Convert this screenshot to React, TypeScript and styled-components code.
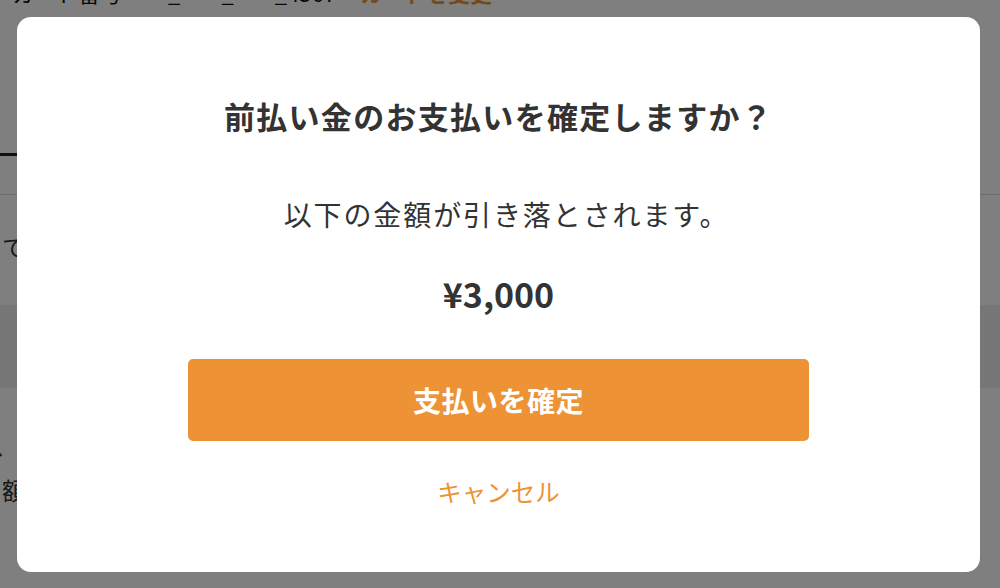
import React from "react";
import styled, { createGlobalStyle } from "styled-components";

const GlobalStyle = createGlobalStyle`
  html, body {
    margin: 0;
    padding: 0;
    width: 1000px;
    height: 588px;
    overflow: hidden;
    background: #ffffff;
    font-family: "Noto Sans CJK JP", "Noto Sans", sans-serif;
  }
  * { box-sizing: border-box; }
`;

const Page = styled.div`
  width: 1000px;
  height: 588px;
  overflow: hidden;
  background: #ffffff;
  color: #222;
`;

const TopLine = styled.div`
  display: flex;
  align-items: baseline;
  gap: 24px;
  margin-top: -20px;
  padding-left: 12px;
  height: 26px;
  font-size: 22px;
  line-height: 24px;
  color: #111;
`;

const OrangeLink = styled.span`
  color: #ed9335;
  font-weight: 700;
`;

const TabBar = styled.div`
  display: flex;
  height: 189px;
  align-items: flex-end;
  border-bottom: 1px solid #d8d8d8;
`;

const Tab = styled.div<{ $active?: boolean }>`
  width: 220px;
  height: 40px;
  margin-bottom: 38px;
  border-bottom: 3px solid ${(p) => (p.$active ? "#222" : "transparent")};
`;

const BodyText = styled.p<{ $indent?: number }>`
  margin: 0;
  padding-left: 2px;
  font-size: 24px;
  line-height: 32px;
  color: #333;
  text-indent: ${(p) => p.$indent ?? 0}px;
  white-space: nowrap;
`;

const Section = styled.div`
  padding-top: 36px;
  height: 110px;
`;

const GreyBand = styled.div`
  height: 83px;
  background: #eeeeee;
`;

const Lower = styled.div`
  padding-top: 41px;
  display: flex;
  flex-direction: column;
  gap: 13px;
`;

const Overlay = styled.div`
  position: fixed;
  inset: 0;
  background: rgba(0, 0, 0, 0.5);
  display: flex;
  padding: 17px 20px 16px 17px;
`;

const Modal = styled.div`
  flex: 1;
  background: #ffffff;
  border-radius: 14px;
  display: flex;
  flex-direction: column;
  align-items: center;
  padding-top: 83px;
`;

const Title = styled.h2`
  margin: 0;
  font-size: 31px;
  line-height: 32px;
  font-weight: 700;
  color: #333333;
  letter-spacing: 1.3px;
`;

const Message = styled.p`
  margin: 67px 0 0;
  padding-left: 16px;
  font-size: 28px;
  line-height: 30px;
  font-weight: 400;
  color: #333333;
  letter-spacing: 1.9px;
`;

const Amount = styled.div`
  margin-top: 48px;
  font-size: 34px;
  line-height: 34px;
  font-weight: 700;
  color: #333333;
`;

const ConfirmButton = styled.button`
  margin-top: 48px;
  width: 621px;
  height: 82px;
  border: none;
  border-radius: 5px;
  background: #ed9335;
  color: #ffffff;
  font-family: inherit;
  font-size: 28px;
  font-weight: 700;
  letter-spacing: 0.5px;
  cursor: pointer;
`;

const CancelButton = styled.button`
  margin-top: 36px;
  border: none;
  background: transparent;
  color: #ed9335;
  font-family: inherit;
  font-size: 24.5px;
  line-height: 30px;
  font-weight: 400;
  padding: 0;
  cursor: pointer;
`;

export default function App() {
  return (
    <>
      <GlobalStyle />
      <Page>
        <TopLine>
          <span>カード番号 ****_****_****_4567</span>
          <OrangeLink>カードを変更</OrangeLink>
        </TopLine>
        <TabBar>
          <Tab $active />
          <Tab />
        </TabBar>
        <Section>
          <BodyText>てください。</BodyText>
        </Section>
        <GreyBand />
        <Lower>
          <BodyText $indent={-8}>、お支払いください。</BodyText>
          <BodyText>額をご確認ください。</BodyText>
        </Lower>
      </Page>
      <Overlay>
        <Modal role="dialog" aria-modal="true">
          <Title>前払い金のお支払いを確定しますか？</Title>
          <Message>以下の金額が引き落とされます。</Message>
          <Amount>¥3,000</Amount>
          <ConfirmButton>支払いを確定</ConfirmButton>
          <CancelButton>キャンセル</CancelButton>
        </Modal>
      </Overlay>
    </>
  );
}
